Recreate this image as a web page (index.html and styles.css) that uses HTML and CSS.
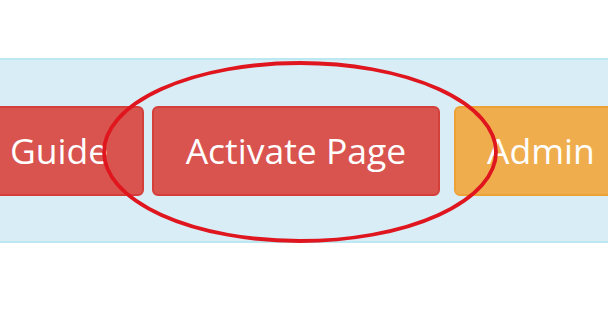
FILE: index.html
```html
<!DOCTYPE html>
<html>
<head>
<meta charset="utf-8">
<link rel="stylesheet" href="styles.css">
</head>
<body>
<div class="page">
  <div class="band">
    <div class="toolbar">
      <button class="btn btn-danger btn-guide">Guide</button>
      <button class="btn btn-danger btn-activate">Activate Page</button>
      <button class="btn btn-warning btn-admin">Admin</button>
    </div>
  </div>
  <svg class="mark" width="608" height="319" viewBox="0 0 608 319">
    <ellipse cx="300" cy="152" rx="196" ry="89" fill="none" stroke="#e0161f" stroke-width="3.8"/>
  </svg>
</div>
</body>
</html>
```
FILE: styles.css
```css
html, body {
  margin: 0;
  padding: 0;
  background: #ffffff;
  overflow: hidden;
}
.page {
  position: relative;
  width: 608px;
  height: 319px;
  padding-top: 58px;
  box-sizing: border-box;
}
.band {
  background: #d9edf7;
  border-top: 2px solid #bce8f1;
  border-bottom: 2px solid #bce8f1;
  height: 185px;
  box-sizing: border-box;
  padding-top: 46px;
  overflow: hidden;
}
.toolbar {
  display: flex;
  align-items: flex-start;
  margin-left: -40px;
  width: 800px;
}
.btn {
  flex: none;
  height: 90px;
  box-sizing: border-box;
  border-radius: 6px;
  border: 2px solid;
  font-family: "Open Sans", "DejaVu Sans", sans-serif;
  font-size: 35.5px;
  color: #fff;
  padding: 0;
  display: flex;
  align-items: center;
  justify-content: center;
  line-height: 1;
}
.btn-danger {
  background: #d9534f;
  border-color: #d43f3a;
}
.btn-warning {
  background: #f0ad4e;
  border-color: #eea236;
}
.btn-guide {
  width: 184px;
  justify-content: flex-start;
  padding-left: 48px;
}
.btn-activate {
  width: 288px;
  margin-left: 8px;
}
.btn-admin {
  width: 220px;
  margin-left: 14px;
  justify-content: flex-start;
  padding-left: 31px;
}
.mark {
  position: absolute;
  left: 0;
  top: 0;
  pointer-events: none;
}
```
